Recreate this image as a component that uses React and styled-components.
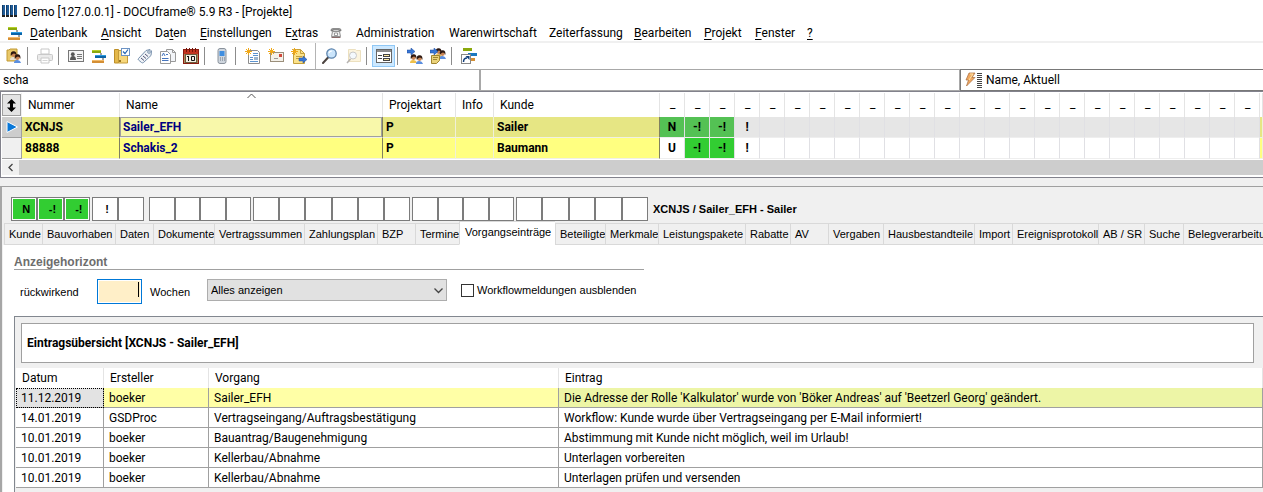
import React from "react";
import styled, { createGlobalStyle, css } from "styled-components";

const UI = `Roboto, "Noto Sans", sans-serif`;
const FORM = `"Liberation Sans", Arial, sans-serif`;

const Global = createGlobalStyle`
  * { box-sizing: border-box; }
  html, body { margin: 0; background: #f0f0f0; overflow-x: hidden; }
  body { font: 12px/16px ${UI}; color: #000; }
  button, input, select { font: inherit; color: inherit; margin: 0; }
  #root { min-height: 100vh; display: flex; flex-direction: column; }
`;

const Window = styled.div`
  flex: 1;
  display: flex;
  flex-direction: column;
  overflow: hidden;
`;

const TitleBar = styled.header`
  display: flex;
  align-items: center;
  gap: 6px;
  height: 23px;
  padding: 0 2px;
  background: #fff;
  white-space: pre;
`;

const MenuBar = styled.nav`
  display: flex;
  align-items: center;
  height: 18px;
  padding-left: 7px;
  background: #fff;
`;

const MenuItem = styled.button`
  flex: none;
  width: ${(p) => p.$w}px;
  padding: 2px 0 0;
  border: 0;
  background: none;
  text-align: left;
  white-space: nowrap;
  line-height: 16px;
  svg { display: block; }
  u { text-underline-offset: 2px; }
`;

const Toolbar = styled.div`
  display: flex;
  align-items: center;
  height: 28px;
  padding-left: 2px;
  border-top: 2px solid #f0f0f0;
  background: #fff;
`;

const ToolButton = styled.button`
  flex: none;
  display: flex;
  align-items: center;
  justify-content: center;
  width: 23px;
  height: 22px;
  padding: 0;
  border: 1px solid ${(p) => (p.$active ? "#90c8f6" : "transparent")};
  background: ${(p) => (p.$active ? "#cce8ff" : "none")};
  opacity: ${(p) => (p.disabled ? 0.4 : 1)};
`;

const ToolSeparator = styled.i`
  flex: none;
  width: 1px;
  height: ${(p) => (p.$tall ? 26 : 18)}px;
  margin: 0 ${(p) => (p.$tall ? 2 : 5)}px 0 ${(p) => (p.$tall ? 5 : 2)}px;
  background: ${(p) => (p.$tall ? "#b4b4b4" : "#8c8c8c")};
`;

const SearchRow = styled.div`
  display: grid;
  grid-template-columns: 38% 38% 24%;
  height: 23px;
  border-bottom: 1px solid #82828c;
`;

const SearchField = styled.input`
  min-width: 0;
  padding: 0 3px;
  border: 1px solid #a8a8a8;
  border-left-width: ${(p) => (p.$first ? 0 : 1)}px;
  border-radius: 0;
  background: #fff;
  outline: 0;
`;

const SortButton = styled.button`
  display: flex;
  align-items: center;
  gap: 4px;
  padding: 0 4px;
  border: 1px solid #787878;
  border-right: 0;
  background: #fff;
`;

const GridPane = styled.section`
  border-left: 1px solid #82828c;
  border-bottom: 1px solid #82828c;
  padding-left: 1px;
  padding-top: 1px;
  background: #fff;
  overflow: hidden;
`;

const ProjectTable = styled.table`
  width: 100%;
  table-layout: fixed;
  border-collapse: separate;
  border-spacing: 0;
`;

const HeadCell = styled.th`
  height: 24px;
  padding: 0 0 ${(p) => (p.$flag ? 2 : 0)}px ${(p) => (p.$flag ? 10 : 6)}px;
  border-right: 1px solid #e4e4e4;
  text-align: left;
  font-weight: 400;
  position: relative;
`;

const SortCaret = styled.svg`
  position: absolute;
  top: 0;
  left: 50%;
  margin-left: -4px;
`;

const ScrollCorner = styled.button`
  display: flex;
  align-items: center;
  justify-content: center;
  width: 19px;
  height: 22px;
  padding: 0;
  border: 1px solid #a0a0a0;
  background: #e3e3e3;
`;

const CornerCell = styled.th`
  padding: 0;
  border-right: 1px solid #f0f0f0;
`;

const RowMark = styled.th`
  height: 21px;
  padding: 0 0 0 4px;
  border-right: 1px solid #a0a0a0;
  border-bottom: 1px solid #a0a0a0;
  background: ${(p) => (p.$active ? "#cdcdcd" : "#f0f0f0")};
  svg { display: block; }
`;

const Cell = styled.td`
  height: 21px;
  padding: 0 0 1px 3px;
  line-height: 16px;
  font-weight: 700;
  color: ${(p) => (p.$link ? "#000080" : "#000")};
  background: ${(p) => (p.$active ? "#e6e684" : "#ffff80")};
  border-right: 1px solid ${(p) => (p.$strong ? "#808060" : "#f0f0d8")};
  border-bottom: 1px solid #f0f0e4;
  white-space: nowrap;
  ${(p) =>
    p.$link &&
    p.$active &&
    css`
      background: #f8f8aa;
      box-shadow: inset 0 0 0 1px #a0a0a0;
    `}
`;

const flagColor = (p) => {
  if (p.$on) return p.$active ? "#54c154" : "#32cd32";
  return p.$active ? "#e6e6e6" : "#fff";
};

const FlagCell = styled.td`
  padding: 0 0 1px;
  text-align: center;
  font-weight: 700;
  line-height: 16px;
  background: ${flagColor};
  border-right: 1px solid #e0e0e4;
  border-bottom: 1px solid #eeeeee;
`;

const ScrollTrack = styled.div`
  display: flex;
  height: 18px;
  padding: 1px 0 2px;
  background: #fff;
`;

const ScrollArrow = styled.button`
  display: flex;
  align-items: center;
  justify-content: center;
  width: 17px;
  padding: 0;
  border: 0;
  background: #f0f0f0;
`;

const ScrollThumb = styled.div`
  flex: 1;
  background: #cdcdcd;
`;

const Detail = styled.section`
  flex: 1;
  display: flex;
  flex-direction: column;
  margin-top: 8px;
  border-top: 1px solid #a0a0a0;
  border-left: 2px solid #a6a6a6;
  padding-left: 1px;
  font: 11px/14px ${FORM};
`;

const StatusRow = styled.div`
  display: flex;
  align-items: center;
  padding: 10px 0 0 8px;
`;

const StatusGroup = styled.div`
  flex: none;
  display: flex;
  width: ${(p) => p.$w}px;
  height: 24px;
  margin-right: ${(p) => p.$gap}px;
`;

const StatusBox = styled.span`
  flex: 1;
  display: flex;
  align-items: center;
  justify-content: center;
  padding-left: 4px;
  border: 1px solid #7c7c7c;
  background: #fff;
  font-weight: 700;
  ${(p) =>
    p.$on &&
    css`
      background: #32cd32;
      box-shadow: inset 0 0 0 1px #fff;
    `}
`;

const StatusTitle = styled.strong`
  margin-left: 5px;
  white-space: nowrap;
`;

const Tabs = styled.div`
  display: flex;
  align-items: flex-end;
  height: 24px;
  padding-left: 1px;
`;

const Tab = styled.button`
  flex: none;
  width: ${(p) => p.$w}px;
  height: ${(p) => (p.$active ? 24 : 22)}px;
  padding: ${(p) => (p.$active ? "0 0 2px 5px" : "0 0 0 4px")};
  border: 1px solid #d9d9d9;
  border-right: 0;
  border-bottom-color: ${(p) => (p.$active ? "#fff" : "#d9d9d9")};
  background: ${(p) => (p.$active ? "#fff" : "#f0f0f0")};
  text-align: left;
  white-space: nowrap;
`;

const TabPage = styled.div`
  flex: 1;
  display: flex;
  flex-direction: column;
  padding: 10px 0 0 11px;
  background: #fff;
`;

const Fieldset = styled.fieldset`
  width: 630px;
  max-width: 100%;
  margin: 0;
  padding: 0;
  border: 0;
`;

const Legend = styled.legend`
  width: 100%;
  padding: 0;
  border-bottom: 1px solid #a0a0a0;
  font-size: 12px;
  line-height: 14px;
  font-weight: 700;
  color: #6d6d6d;
`;

const Controls = styled.div`
  display: flex;
  align-items: flex-start;
  height: 46px;
  padding: 9px 0 0 6px;
`;

const Label = styled.label`
  flex: none;
  width: ${(p) => p.$w}px;
  padding-top: 6px;
`;

const WeeksBox = styled.span`
  display: flex;
  align-items: center;
  width: 45px;
  height: 25px;
  padding: 1px;
  margin-right: 8px;
  border: 1px solid #0078d7;
  background: #ffefc8;
  box-shadow: inset 0 0 0 1px #fff;
`;

const WeeksInput = styled.input`
  flex: 1;
  min-width: 0;
  padding: 0;
  border: 0;
  outline: 0;
  background: none;
  text-align: right;
`;

const TextCursor = styled.i`
  width: 1px;
  height: 15px;
  background: #000;
  margin: 0 1px 4px 0;
`;

const SelectBox = styled.span`
  display: grid;
  width: 240px;
  margin-right: 14px;
  align-items: center;
  > * { grid-area: 1 / 1; }
  > svg { justify-self: end; margin-right: 4px; pointer-events: none; }
`;

const Select = styled.select`
  appearance: none;
  height: 22px;
  padding: 0 20px 0 3px;
  border: 1px solid #adadad;
  border-radius: 0;
  background: #e1e1e1;
`;

const CheckLabel = styled.label`
  display: flex;
  align-items: center;
  gap: 3px;
  height: 22px;
  white-space: nowrap;
`;

const Checkbox = styled.input`
  appearance: none;
  width: 13px;
  height: 13px;
  border: 1px solid #333;
  background: #fff;
`;

const EntryPane = styled.section`
  flex: 1;
  border-top: 1px solid #82878f;
  border-left: 1px solid #82878f;
  padding: 6px 0 0 1px;
  background: #f0f0f0;
  font: 12px/16px ${UI};
`;

const EntryTitle = styled.h2`
  display: flex;
  align-items: center;
  height: 40px;
  margin: 0 9px 5px 5px;
  padding-left: 5px;
  border: 1px solid #a0a0a0;
  background: #fff;
  font-size: 12px;
  font-weight: 700;
`;

const EntryTable = styled.table`
  width: 100%;
  table-layout: fixed;
  border-spacing: 0;
  background: #fff;
  th {
    height: 20px;
    padding: 0 0 0 6px;
    text-align: left;
    font-weight: 400;
    border-right: 1px solid #e4e4e4;
  }
`;

const EntryCell = styled.td`
  height: 20px;
  padding: 0 0 0 5px;
  line-height: 16px;
  white-space: nowrap;
  border-right: 1px solid #a0a0a0;
  border-bottom: 1px solid #a0a0a0;
  background: ${(p) => p.$bg || "#fff"};
  ${(p) =>
    p.$focus &&
    css`
      outline: 1px dotted #000;
      outline-offset: -1px;
    `}
`;

/* ---------- icons ---------- */

const Svg = ({ children, w = 16, h = 16 }) => (
  <svg width={w} height={h} viewBox={`0 0 ${w} ${h}`} fill="none" aria-hidden="true">
    {children}
  </svg>
);

const AppIcon = () => (
  <Svg w={15} h={13}>
    {[0, 4, 8, 12].map((x) => (
      <g key={x}>
        <rect x={x} y="0" width="3" height="10" fill="#1f5c99" />
        <rect x={x} y="0" width="1" height="10" fill="#123a63" />
        <rect x={x} y="10" width="3" height="2" fill="#202020" />
      </g>
    ))}
  </Svg>
);

const BarsIcon = () => (
  <Svg>
    <rect x="1" y="2" width="9" height="3" fill="#8aa80c" />
    <rect x="1" y="2" width="9" height="1" fill="#b5d02a" />
    <path d="M10 5v2" stroke="#444" />
    <rect x="4" y="7" width="11" height="3" fill="#0a64a8" />
    <rect x="4" y="7" width="11" height="1" fill="#2c9be0" />
    <path d="M12 10v2" stroke="#444" />
    <rect x="1" y="12" width="12" height="3" fill="#d48f35" />
    <rect x="1" y="12" width="12" height="1" fill="#f3bb6a" />
  </Svg>
);

const Person = ({ x, y, body }) => (
  <g transform={`translate(${x} ${y})`}>
    <path d="M0 9q0-3 3-3t4 3z" fill={body} />
    <circle cx="3.5" cy="3.6" r="2.4" fill="#c98556" />
    <path d="M.8 5Q0 .4 3.500.300T6.400 5L5.400 3 3.800 2.600 2 3.400z" fill="#2c1710" />
  </g>
);

const AddressIcon = () => (
  <Svg>
    <path d="M1 2h2l1-1h7v12H1z" fill="#e9c869" stroke="#c29a34" />
    <Person x={4} y={3} body="#e8e0d0" />
    <Person x={8} y={6} body="#5b8fe0" />
  </Svg>
);

const PrinterIcon = () => (
  <Svg>
    <path d="M4 1h8v5H4z" fill="#fff" stroke="#777" />
    <rect x=".5" y="6.500" width="15" height="6" rx="1" fill="#ccc" stroke="#777" />
    <path d="M4 10h8v5H4z" fill="#fff" stroke="#777" />
    <path d="M5.500 12.500h5" stroke="#999" />
  </Svg>
);

const CardIcon = () => (
  <Svg>
    <rect x=".5" y="2.500" width="15" height="11" fill="#f4f4f4" stroke="#777" />
    <circle cx="4.800" cy="6.200" r="1.900" fill="#555" />
    <path d="M2 12q0-4 3-4t3 4z" fill="#555" />
    <path d="M9 6.500h5M9 8.500h5M9 10.500h5" stroke="#777" />
  </Svg>
);

const FolderCheckIcon = () => (
  <Svg>
    <path d="M.5 1.500h4V15h-4z" fill="#e4b84a" stroke="#bd8f28" />
    <path d="M4.500 2.500h9V15h-9z" fill="#f7d77b" stroke="#c39b3a" />
    <rect x="7.500" y=".5" width="8" height="7" fill="#fff" stroke="#6c93c4" />
    <path d="M9 3.500l2 2 3-4" stroke="#2466b0" strokeWidth="1.200" />
    <path d="M5 12h2v2H5z" fill="#9c7720" />
  </Svg>
);

const TagIcon = () => (
  <Svg>
    <path d="M1.500 10.500L9 2.500l4-1 1.500 1.500-.5 4.500-7.500 7q-1 .8-2 0l-3-2.500q-.8-.8 0-1.500z" fill="#eef2f6" stroke="#7790ad" />
    <circle cx="12" cy="4" r="1.300" fill="#fff" stroke="#7790ad" />
    <path d="M4 10l3 2.500M6 8l3 2.500M8 6l3 2.500" stroke="#557" />
  </Svg>
);

const DocsIcon = () => (
  <Svg>
    <path d="M6.500 1.500h6l3 3v9h-9z" fill="#f2f4f8" stroke="#999" />
    <path d="M12.500 1.500v3h3" stroke="#999" />
    <path d="M.5 3.500h7l3 3v9H.5z" fill="#fff" stroke="#999" />
    <path d="M2 8l1.500-3L5 8M6 6.500h2M2 10.500h6.500M2 12.500h6.500" stroke="#4675bd" />
  </Svg>
);

const CalendarIcon = () => (
  <Svg>
    <rect x=".5" y="1.500" width="15" height="14" fill="#a88a5c" stroke="#8a1c10" />
    <rect x="1" y="2" width="14" height="4" fill="#c2331e" />
    <path d="M3.500 0v4M6.500 0v4M9.500 0v4M12.500 0v4" stroke="#741409" />
    <rect x="2.500" y="6.500" width="11" height="8" fill="#f3eee2" stroke="#6b5b3c" />
    <path d="M5.500 8v5M4 8.500h1M8.500 8.500h3v4h-3z" stroke="#111" />
  </Svg>
);

const MobileIcon = () => (
  <Svg>
    <rect x="4" y=".5" width="8" height="15" rx="2" fill="#cfd6de" stroke="#8a929c" />
    <rect x="5.500" y="3" width="5" height="5" fill="#3f8ee0" />
    <path d="M6 10h1M8 10h1M10 10h1M6 12h1M8 12h1M10 12h1" stroke="#6b7480" />
  </Svg>
);

const Spark = () => (
  <path d="M3.500 0v7M0 3.500h7M1 1l5 5M6 1L1 6" stroke="#f0a818" />
);

const NewDocIcon = () => (
  <Svg>
    <path d="M3.500 2.500h9l2 2v11h-11z" fill="#fff" stroke="#8d8d8d" />
    <path d="M8 5.500h5M8 7.500h5M5 9.500h3M5 11.500h3M5 13.500h8" stroke="#5c93cf" />
    <rect x="9" y="9" width="4" height="3" fill="#9cb4cc" />
    <Spark />
  </Svg>
);

const NewMailIcon = () => (
  <Svg>
    <rect x="2.500" y="4.500" width="13" height="9" fill="#f4f1ea" stroke="#9b8f7b" />
    <rect x="11" y="6" width="3" height="3" fill="#d0483a" />
    <path d="M6 10.500h4" stroke="#999" />
    <Spark />
  </Svg>
);

const Arrow = ({ x, y }) => (
  <path transform={`translate(${x} ${y})`} d="M0 2h4V0l4 3.500L4 7V5H0z" fill="#3877d6" stroke="#1c4b9a" strokeWidth=".5" />
);

const NoteSendIcon = () => (
  <Svg>
    <path d="M2.500 1.500h7l4 4v10h-11z" fill="#fbe28a" stroke="#c5a03c" />
    <path d="M9.500 1.500v4h4M5 8.500h6M5 10.500h3" stroke="#c5a03c" />
    <Arrow x={8} y={8} />
    <Spark />
  </Svg>
);

const SearchIcon = () => (
  <Svg>
    <path d="M1 15l5.500-6" stroke="#4c4440" strokeWidth="2" strokeLinecap="round" />
    <circle cx="9.500" cy="5.500" r="4.700" fill="#cbe5fb" stroke="#5d84ad" strokeWidth="1.300" />
    <path d="M7 5q.5-2 3-2" stroke="#fff" strokeWidth="1.200" />
  </Svg>
);

const SearchDocIcon = () => (
  <Svg>
    <path d="M3.500 1.500h7l1 1h4v11h-12z" fill="#f8e5ae" stroke="#d1b262" />
    <path d="M2 15l3.500-4" stroke="#4c4440" strokeWidth="1.500" />
    <circle cx="8" cy="7.500" r="3.500" fill="#e6f1fb" stroke="#777" />
  </Svg>
);

const FormIcon = () => (
  <Svg>
    <rect x=".5" y="1.500" width="15" height="13" fill="#fff" stroke="#666" />
    <rect x="1" y="2" width="14" height="2" fill="#8c8c8c" />
    <path d="M2 7.500h4M2 10.500h4" stroke="#444" />
    <rect x="7.500" y="6.500" width="6" height="2" fill="#ffe9a0" stroke="#444" />
    <rect x="7.500" y="10.500" width="6" height="2" fill="#ffe9a0" stroke="#444" />
  </Svg>
);

const PeopleArrowIcon = () => (
  <Svg>
    <Person x={3} y={6} body="#efc04a" />
    <Person x={9} y={7} body="#5b8fe0" />
    <Arrow x={0} y={0} />
  </Svg>
);

const PeopleNoteIcon = () => (
  <Svg>
    <Person x={5} y={0} body="#efc04a" />
    <Person x={9} y={2} body="#5b8fe0" />
    <path d="M1.500 7.500h8v5l-3 3h-5z" fill="#ead27a" stroke="#a08530" />
    <path d="M3 9.500h5M3 11.500h4" stroke="#a08530" />
    <Arrow x={0} y={0} />
  </Svg>
);

const ShortcutIcon = () => (
  <Svg>
    <rect x="2" y="0" width="9" height="3" fill="#8aa80c" />
    <rect x="7" y="5" width="9" height="3" fill="#1a78c0" />
    <rect x="9" y="10" width="5" height="3" fill="#d48f35" />
    <rect x=".5" y="6.500" width="9" height="9" fill="#fff" stroke="#888" />
    <path d="M2.500 14q0-4 3.500-4" stroke="#123f7c" strokeWidth="1.500" />
    <path d="M4.500 8h4v4z" fill="#123f7c" />
  </Svg>
);

const PhoneIcon = () => (
  <Svg w={12} h={12}>
    <path d="M1 4V3q0-1.500 2-1.500h6q2 0 2 1.500v1H9V3H3v1z" fill="#999" stroke="#666" strokeWidth=".6" />
    <path d="M2.500 4.500h7l1 5h-9z" fill="#eee" stroke="#777" strokeWidth=".8" />
    <path d="M4.500 6h3v2.500h-3z" fill="#fff" stroke="#777" strokeWidth=".7" />
    <path d="M1.500 10.500h9" stroke="#8a6a6a" />
  </Svg>
);

const BoltIcon = () => (
  <Svg w={17} h={16}>
    <path d="M4 1h6L7 5.500h3L1.500 14l2-6H1z" fill="#f0a860" stroke="#a66a3c" strokeWidth=".7" />
    <path d="M5 2h3L4 8" stroke="#ffe3a4" />
    {[1, 3, 5, 7, 9, 11, 13, 15].map((y) => (
      <rect key={y} x="12" y={y} width="5" height="1" fill="#444" />
    ))}
  </Svg>
);

const UpDownIcon = () => (
  <Svg w={9} h={13}>
    <path d="M4.500 0L9 4.500H6v4h3L4.500 13 0 8.500h3v-4H0z" fill="#000" />
  </Svg>
);

const CurrentRowIcon = () => (
  <Svg w={12} h={12}>
    <path d="M1 .5v11L11.500 6z" fill="#0a78d8" stroke="#fff" />
  </Svg>
);

const Chevron = ({ d, w = 9, h = 9 }) => (
  <Svg w={w} h={h}>
    <path d={d} stroke="#444" strokeWidth="1.300" />
  </Svg>
);

/* ---------- data ---------- */

const MENU = [
  [<BarsIcon />, 23],
  [<><u>D</u>atenbank</>, 71],
  [<><u>A</u>nsicht</>, 54],
  [<>Da<u>t</u>en</>, 45],
  [<><u>E</u>instellungen</>, 85],
  [<>E<u>x</u>tras</>, 45],
  [<PhoneIcon />, 26],
  ["Administration", 93],
  ["Warenwirtschaft", 100],
  ["Zeiterfassung", 85],
  [<><u>B</u>earbeiten</>, 70],
  [<><u>P</u>rojekt</>, 51],
  [<><u>F</u>enster</>, 52],
  [<u>?</u>, 20],
];

const TOOLS = [
  ["Adressen", AddressIcon], "|",
  ["Drucken", PrinterIcon, "disabled"], "|",
  ["Kontakt", CardIcon], ["Projekte", BarsIcon], ["Aufgaben", FolderCheckIcon],
  ["Merkmale", TagIcon], ["Dokumente", DocsIcon], ["Kalender", CalendarIcon], "|",
  ["Telefon", MobileIcon], "|",
  ["Neues Dokument", NewDocIcon], ["Neue Nachricht", NewMailIcon], ["Notiz senden", NoteSendIcon], "||",
  ["Suchen", SearchIcon], ["Volltextsuche", SearchDocIcon, "disabled"], "|",
  ["Formular", FormIcon, "active"], "|",
  ["Zuordnen", PeopleArrowIcon], ["Notiz zuordnen", PeopleNoteIcon], "|",
  ["Verknüpfung", ShortcutIcon],
];

const FLAG_COUNT = 24;
const FLAGS = Array.from({ length: FLAG_COUNT }, (_, i) => i);

const PROJECTS = [
  { nr: "XCNJS", name: "Sailer_EFH", kind: "P", customer: "Sailer", flags: ["N", "-!", "-!", "!"], on: [0, 1, 2], active: true },
  { nr: "88888", name: "Schakis_2", kind: "P", customer: "Baumann", flags: ["U", "-!", "-!", "!"], on: [1, 2] },
];

const STATUS = [
  { w: 79, gap: 2, boxes: ["N", "-!", "-!"], on: true },
  { w: 52, gap: 5, boxes: ["!", ""] },
  { w: 102, gap: 2, boxes: ["", "", "", ""] },
  { w: 157, gap: 2, boxes: ["", "", "", "", "", ""] },
  { w: 102, gap: 2, boxes: ["", "", "", ""] },
  { w: 132, gap: 0, boxes: ["", "", "", "", ""] },
];

const TABS = [
  ["Kunde", 38], ["Bauvorhaben", 73], ["Daten", 38], ["Dokumente", 61],
  ["Vertragssummen", 90], ["Zahlungsplan", 73], ["BZP", 38], ["Termine", 44],
  ["Vorgangseinträge", 96], ["Beteiligte", 50], ["Merkmale", 53],
  ["Leistungspakete", 87], ["Rabatte", 45], ["AV", 38], ["Vergaben", 55],
  ["Hausbestandteile", 91], ["Import", 38], ["Ereignisprotokoll", 86],
  ["AB / SR", 46], ["Suche", 39], ["Belegverarbeitung", 100],
];
const ACTIVE_TAB = "Vorgangseinträge";

const ENTRIES = [
  ["11.12.2019", "boeker", "Sailer_EFH", "Die Adresse der Rolle 'Kalkulator' wurde von 'Böker Andreas' auf 'Beetzerl Georg' geändert."],
  ["14.01.2019", "GSDProc", "Vertragseingang/Auftragsbestätigung", "Workflow: Kunde wurde über Vertragseingang per E-Mail informiert!"],
  ["10.01.2019", "boeker", "Bauantrag/Baugenehmigung", "Abstimmung mit Kunde nicht möglich, weil im Urlaub!"],
  ["10.01.2019", "boeker", "Kellerbau/Abnahme", "Unterlagen vorbereiten"],
  ["10.01.2019", "boeker", "Kellerbau/Abnahme", "Unterlagen prüfen und versenden"],
];
const SELECTED_BG = ["#e3e3e3", "#ffffa6", "#ffffa6", "#edf5a6"];

/* ---------- page ---------- */

function ToolItem({ tool }) {
  if (typeof tool === "string") return <ToolSeparator $tall={tool === "||"} />;
  const [label, Icon, state] = tool;
  return (
    <ToolButton aria-label={label} disabled={state === "disabled"} $active={state === "active"}>
      <Icon />
    </ToolButton>
  );
}

function ProjectRow({ row }) {
  const a = row.active;
  return (
    <tr>
      <RowMark $active={a}>{a && <CurrentRowIcon />}</RowMark>
      <Cell $active={a} $strong>{row.nr}</Cell>
      <Cell $active={a} $link $strong>{row.name}</Cell>
      <Cell $active={a}>{row.kind}</Cell>
      <Cell $active={a} />
      <Cell $active={a} $strong>{row.customer}</Cell>
      {FLAGS.map((i) => (
        <FlagCell key={i} $active={a} $on={row.on.includes(i)}>{row.flags[i]}</FlagCell>
      ))}
      <Cell $active={a} />
    </tr>
  );
}

export default function App() {
  return (
    <>
      <Global />
      <Window>
        <TitleBar><AppIcon />Demo [127.0.0.1] - DOCUframe® 5.9 R3 - [Projekte]</TitleBar>
        <MenuBar>
          {MENU.map(([label, w], i) => (
            <MenuItem key={i} $w={w}>{label}</MenuItem>
          ))}
        </MenuBar>
        <Toolbar>
          {TOOLS.map((tool, i) => <ToolItem key={i} tool={tool} />)}
        </Toolbar>
        <SearchRow>
          <SearchField $first defaultValue="scha" aria-label="Suchbegriff" />
          <SearchField aria-label="Zweiter Suchbegriff" />
          <SortButton><BoltIcon />Name, Aktuell</SortButton>
        </SearchRow>

        <GridPane>
          <ProjectTable>
            <colgroup>
              {[20, 98, 263, 73, 38, 166].map((w) => <col key={w} width={w} />)}
              {FLAGS.map((i) => <col key={i} width="25" />)}
              <col />
            </colgroup>
            <thead>
              <tr>
                <CornerCell><ScrollCorner aria-label="Sortierung"><UpDownIcon /></ScrollCorner></CornerCell>
                <HeadCell>Nummer</HeadCell>
                <HeadCell>
                  Name
                  <SortCaret width="9" height="6" viewBox="0 0 9 6" fill="none">
                    <path d="M.5 5l4-4 4 4" stroke="#555" />
                  </SortCaret>
                </HeadCell>
                <HeadCell>Projektart</HeadCell>
                <HeadCell>Info</HeadCell>
                <HeadCell>Kunde</HeadCell>
                {FLAGS.map((i) => <HeadCell key={i} $flag>_</HeadCell>)}
                <HeadCell />
              </tr>
            </thead>
            <tbody>
              {PROJECTS.map((row) => <ProjectRow key={row.nr} row={row} />)}
            </tbody>
          </ProjectTable>
          <ScrollTrack>
            <ScrollArrow aria-label="Nach links"><Chevron d="M6.500 1L3 4.500 6.500 8" /></ScrollArrow>
            <ScrollThumb />
          </ScrollTrack>
        </GridPane>

        <Detail>
          <StatusRow>
            {STATUS.map((g, i) => (
              <StatusGroup key={i} $w={g.w} $gap={g.gap}>
                {g.boxes.map((text, j) => <StatusBox key={j} $on={g.on}>{text}</StatusBox>)}
              </StatusGroup>
            ))}
            <StatusTitle>XCNJS / Sailer_EFH - Sailer</StatusTitle>
          </StatusRow>
          <Tabs role="tablist">
            {TABS.map(([label, w]) => (
              <Tab key={label} role="tab" $w={w} $active={label === ACTIVE_TAB} aria-selected={label === ACTIVE_TAB}>
                {label}
              </Tab>
            ))}
          </Tabs>
          <TabPage>
            <Fieldset>
              <Legend>Anzeigehorizont</Legend>
              <Controls>
                <Label $w={77} htmlFor="weeks">rückwirkend</Label>
                <WeeksBox>
                  <WeeksInput id="weeks" />
                  <TextCursor />
                </WeeksBox>
                <Label $w={57} htmlFor="weeks">Wochen</Label>
                <SelectBox>
                  <Select aria-label="Anzeige"><option>Alles anzeigen</option></Select>
                  <Chevron d="M.5 2.500l4 4 4-4" />
                </SelectBox>
                <CheckLabel><Checkbox type="checkbox" />Workflowmeldungen ausblenden</CheckLabel>
              </Controls>
            </Fieldset>
            <EntryPane>
              <EntryTitle>Eintragsübersicht [XCNJS - Sailer_EFH]</EntryTitle>
              <EntryTable>
                <colgroup>
                  <col width="88" /><col width="105" /><col width="350" /><col />
                </colgroup>
                <thead>
                  <tr><th>Datum</th><th>Ersteller</th><th>Vorgang</th><th>Eintrag</th></tr>
                </thead>
                <tbody>
                  {ENTRIES.map((entry, r) => (
                    <tr key={r}>
                      {entry.map((text, c) => (
                        <EntryCell key={c} $bg={r === 0 ? SELECTED_BG[c] : undefined} $focus={r === 0 && c === 0}>
                          {text}
                        </EntryCell>
                      ))}
                    </tr>
                  ))}
                </tbody>
              </EntryTable>
            </EntryPane>
          </TabPage>
        </Detail>
      </Window>
    </>
  );
}
